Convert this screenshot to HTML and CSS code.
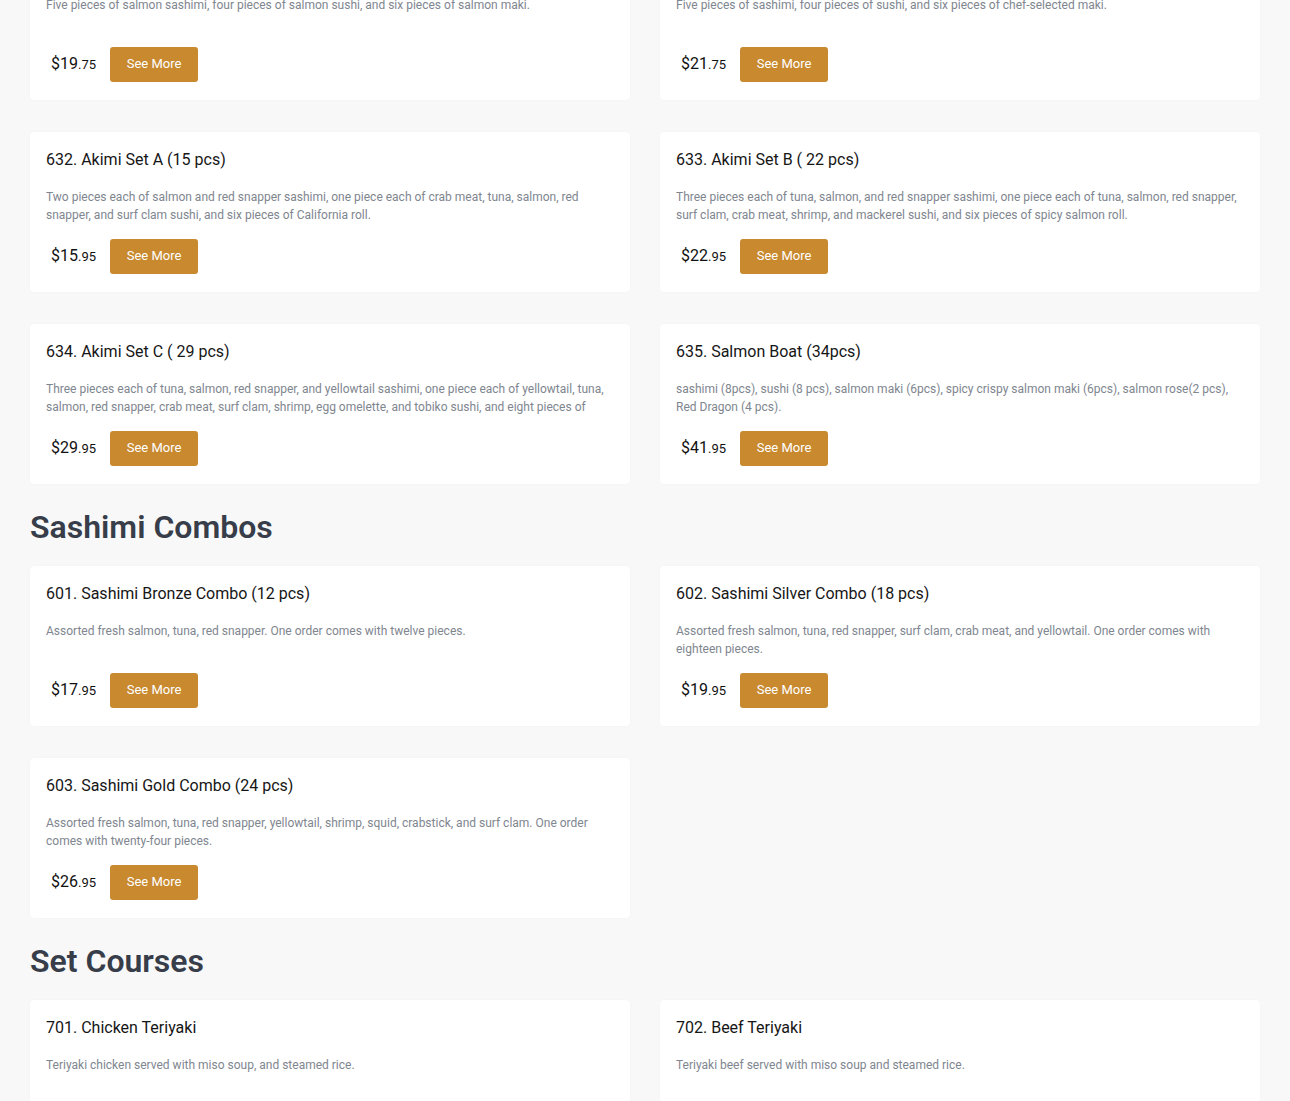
FILE: index.html
```html
<!DOCTYPE html>
<html>
<head>
<meta charset="utf-8">
<link rel="stylesheet" href="styles.css">
</head>
<body>
<main class="menu">
  <div class="grid grid-first">
    <div class="card">
      <h3 class="title">630. Salmon Lover</h3>
      <p class="desc">Five pieces of salmon sashimi, four pieces of salmon sushi, and six pieces of salmon maki.</p>
      <div class="buy"><span class="price">$19<small>.75</small></span><button class="btn">See More</button></div>
    </div>
    <div class="card">
      <h3 class="title">631. Chef's Choice</h3>
      <p class="desc">Five pieces of sashimi, four pieces of sushi, and six pieces of chef-selected maki.</p>
      <div class="buy"><span class="price">$21<small>.75</small></span><button class="btn">See More</button></div>
    </div>
    <div class="card">
      <h3 class="title">632. Akimi Set A (15 pcs)</h3>
      <p class="desc">Two pieces each of salmon and red snapper sashimi, one piece each of crab meat, tuna, salmon, red snapper, and surf clam sushi, and six pieces of California roll.</p>
      <div class="buy"><span class="price">$15<small>.95</small></span><button class="btn">See More</button></div>
    </div>
    <div class="card">
      <h3 class="title">633. Akimi Set B ( 22 pcs)</h3>
      <p class="desc">Three pieces each of tuna, salmon, and red snapper sashimi, one piece each of tuna, salmon, red snapper, surf clam, crab meat, shrimp, and mackerel sushi, and six pieces of spicy salmon roll.</p>
      <div class="buy"><span class="price">$22<small>.95</small></span><button class="btn">See More</button></div>
    </div>
    <div class="card">
      <h3 class="title">634. Akimi Set C ( 29 pcs)</h3>
      <p class="desc">Three pieces each of tuna, salmon, red snapper, and yellowtail sashimi, one piece each of yellowtail, tuna, salmon, red snapper, crab meat, surf clam, shrimp, egg omelette, and tobiko sushi, and eight pieces of California roll.</p>
      <div class="buy"><span class="price">$29<small>.95</small></span><button class="btn">See More</button></div>
    </div>
    <div class="card">
      <h3 class="title">635. Salmon Boat (34pcs)</h3>
      <p class="desc">sashimi (8pcs), sushi (8 pcs), salmon maki (6pcs), spicy crispy salmon maki (6pcs), salmon rose(2 pcs), Red Dragon (4 pcs).</p>
      <div class="buy"><span class="price">$41<small>.95</small></span><button class="btn">See More</button></div>
    </div>
  </div>

  <h2 class="section">Sashimi Combos</h2>
  <div class="grid">
    <div class="card">
      <h3 class="title">601. Sashimi Bronze Combo (12 pcs)</h3>
      <p class="desc">Assorted fresh salmon, tuna, red snapper. One order comes with twelve pieces.</p>
      <div class="buy"><span class="price">$17<small>.95</small></span><button class="btn">See More</button></div>
    </div>
    <div class="card">
      <h3 class="title">602. Sashimi Silver Combo (18 pcs)</h3>
      <p class="desc">Assorted fresh salmon, tuna, red snapper, surf clam, crab meat, and yellowtail. One order comes with eighteen pieces.</p>
      <div class="buy"><span class="price">$19<small>.95</small></span><button class="btn">See More</button></div>
    </div>
    <div class="card">
      <h3 class="title">603. Sashimi Gold Combo (24 pcs)</h3>
      <p class="desc">Assorted fresh salmon, tuna, red snapper, yellowtail, shrimp, squid, crabstick, and surf clam. One order comes with twenty-four pieces.</p>
      <div class="buy"><span class="price">$26<small>.95</small></span><button class="btn">See More</button></div>
    </div>
  </div>

  <h2 class="section">Set Courses</h2>
  <div class="grid">
    <div class="card">
      <h3 class="title">701. Chicken Teriyaki</h3>
      <p class="desc">Teriyaki chicken served with miso soup, and steamed rice.</p>
      <div class="buy"><span class="price">$14<small>.95</small></span><button class="btn">See More</button></div>
    </div>
    <div class="card">
      <h3 class="title">702. Beef Teriyaki</h3>
      <p class="desc">Teriyaki beef served with miso soup and steamed rice.</p>
      <div class="buy"><span class="price">$16<small>.95</small></span><button class="btn">See More</button></div>
    </div>
  </div>
</main>
</body>
</html>
```

FILE: styles.css
```css
* { box-sizing: border-box; }
html, body { margin: 0; padding: 0; }
body {
  background: #f8f8f9;
  font-family: Roboto, "Liberation Sans", sans-serif;
  color: #111;
  overflow: hidden;
}
.menu {
  padding: 0 30px;
}
.grid {
  display: grid;
  grid-template-columns: 1fr 1fr;
  column-gap: 30px;
  row-gap: 32px;
}
.grid-first {
  margin-top: -60px;
}
.card {
  background: #fff;
  border-radius: 4px;
  height: 160px;
  padding: 17px 16px 18px;
  box-shadow: 0 0 2px rgba(0,0,0,0.03);
}
.title {
  margin: 0;
  font-size: 16px;
  font-weight: 400;
  line-height: 22px;
  color: #161616;
}
.desc {
  margin: 17px 0 0;
  font-size: 12px;
  line-height: 18px;
  height: 36px;
  overflow: hidden;
  color: #80868f;
}
.buy {
  margin-top: 15px;
  display: flex;
  align-items: center;
  gap: 14px;
}
.price {
  padding-left: 5px;
  padding-bottom: 2px;
  font-size: 16px;
  color: #111;
}
.price small {
  font-size: 13px;
}
.btn {
  width: 88px;
  height: 35px;
  border: none;
  border-radius: 3px;
  background: #c8892f;
  color: #fff;
  font-family: Roboto, "Liberation Sans", sans-serif;
  font-size: 13px;
  padding: 0 0 2px;
}
.section {
  margin: 0;
  padding: 23px 0 19px;
  font-size: 32px;
  line-height: 40px;
  font-weight: 600;
  color: #373d49;
}
```
